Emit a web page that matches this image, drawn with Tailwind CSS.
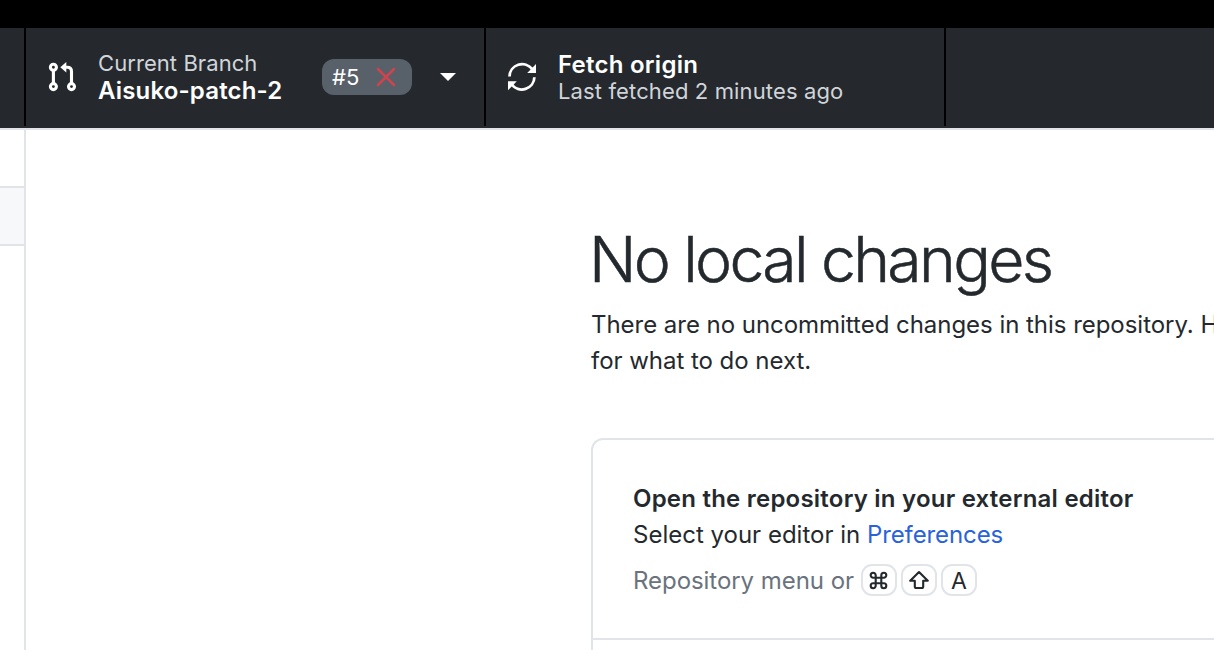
<!DOCTYPE html>
<html lang="en">
<head>
<meta charset="utf-8">
<title>GitHub Desktop</title>
<script src="https://cdn.jsdelivr.net/npm/@tailwindcss/browser@4"></script>
</head>
<body class="h-[650px] w-[1214px] overflow-hidden bg-white font-['Inter','Liberation_Sans',sans-serif] text-[24px] text-[#24292e]">
<div class="flex h-full flex-col">
  <div class="h-7 shrink-0 bg-black"></div>
  <header class="flex h-[102px] shrink-0 border-b-2 border-[#e1e4e8] bg-[#25292e] pb-0.5">
    <div class="w-[26px] shrink-0 border-r-2 border-black"></div>
    <div class="flex w-[460px] shrink-0 items-center border-r-2 border-black pl-[22px]">
      <svg class="h-[30px] w-[30px] shrink-0" viewBox="0 0 30 30" fill="none" stroke="#fff" stroke-width="3.1">
        <circle cx="5.400" cy="5.200" r="3"/><circle cx="5.400" cy="24.600" r="3"/><circle cx="23.500" cy="24.600" r="3"/>
        <path d="M5.400 8v14M23.500 22V9.500q0-4.200-4.200-4.200H17"/><path d="M18.300 0v10.600L12.300 5.300z" fill="#fff" stroke="none"/>
      </svg>
      <div class="ml-5 flex w-[224px] flex-col whitespace-nowrap leading-[28px]">
        <span class="text-[22px] tracking-[0.07px] text-[#d1d5da]">Current Branch</span>
        <span class="font-semibold tracking-[0.17px] text-white">Aisuko-patch-2</span>
      </div>
      <div class="flex h-9 w-[90px] items-center rounded-xl bg-[#586069] pl-2.5 text-[22px] text-white">
        <span>#5</span>
        <svg class="ml-auto mr-4 h-5 w-5" viewBox="0 0 20 20" fill="none" stroke="#cb444e" stroke-width="2.6" stroke-linecap="round"><path d="M2 2l16 16M18 2L2 18"/></svg>
      </div>
      <svg class="ml-7 h-2 w-4" viewBox="0 0 16 8" fill="#fff"><path d="M0 0h16L8 8z"/></svg>
    </div>
    <div class="flex w-[460px] shrink-0 items-center border-r-2 border-black pl-[22px]">
      <svg class="h-[30px] w-[30px] shrink-0" viewBox="0 0 30 30" fill="none" stroke="#fff" stroke-width="2.8">
        <path d="M1.500 14.500A12.600 12.600 0 0 1 24.200 7.200M26.400 15.300A12.600 12.600 0 0 1 3.700 22.400"/>
        <path d="M28 2v9h-8.800zM0 28.200v-9h8.800z" fill="#fff" stroke="none"/>
      </svg>
      <div class="ml-5 flex flex-col whitespace-nowrap pt-0.5 leading-[27px]">
        <span class="font-semibold tracking-[0.25px] text-white">Fetch origin</span>
        <span class="text-[22px] tracking-[0.13px] text-[#d1d5da]">Last fetched 2 minutes ago</span>
      </div>
    </div>
  </header>
  <div class="flex min-h-0 flex-1">
    <aside class="w-[26px] shrink-0 border-r-2 border-[#e1e4e8] pt-14">
      <div class="h-[60px] border-y-2 border-[#e1e4e8] bg-[#f6f8fa]"></div>
    </aside>
    <main class="flex-1 overflow-hidden pl-[565px] pt-[91px]">
      <h1 class="-ml-[2px] whitespace-nowrap text-[62.500px] font-light leading-[76px] tracking-[-2.65px] [-webkit-text-stroke:0.5px_#24292e]">No local changes</h1>
      <p class="mt-[10px] whitespace-nowrap leading-9 tracking-[-0.035px]">There are no uncommitted changes in this repository. Here<br>for what to do next.</p>
      <section class="mt-[59px] h-[400px] w-[900px] rounded-xl border-2 border-[#e1e4e8]">
        <div class="h-[200px] border-b-2 border-[#e1e4e8] pl-10 pt-[41px]">
          <h2 class="font-semibold leading-9 tracking-[0.22px]">Open the repository in your external editor</h2>
          <p class="leading-9">Select your editor in <a class="tracking-[-0.1px] text-[#2962d9]">Preferences</a></p>
          <div class="mt-[11px] flex items-center gap-1 leading-8 text-[#6a737d]">
            <span class="h-8 w-[224px] pt-px tracking-[-0.05px]">Repository menu or</span>
            <kbd class="flex h-8 w-9 items-center justify-center rounded-[11px] border-2 border-[#e1e4e8]">
              <svg class="mr-px h-[19px] w-[19px]" viewBox="0 0 19 19" fill="none" stroke="#24292e" stroke-width="2.1"><path d="M6.700 6.700H4.200A2.500 2.500 0 1 1 6.700 4.200V14.800A2.500 2.500 0 1 1 4.200 12.300H14.800A2.500 2.500 0 1 1 12.300 14.800V4.200A2.500 2.500 0 1 1 14.800 6.700z"/></svg>
            </kbd>
            <kbd class="flex h-8 w-9 items-center justify-center rounded-[11px] border-2 border-[#e1e4e8]">
              <svg class="mr-px h-5 w-5" viewBox="0 0 20 20" fill="none" stroke="#24292e" stroke-width="2.1" stroke-linejoin="round"><path d="M10 2L1.200 10.800H5.800V16.500Q5.800 18 7.300 18H12.700Q14.200 18 14.200 16.500V10.800H18.800z"/></svg>
            </kbd>
            <kbd class="flex h-8 w-9 items-center justify-center rounded-[11px] border-2 border-[#e1e4e8] pt-0.5 font-['Inter','Liberation_Sans',sans-serif] text-[23px] leading-none text-[#24292e]">A</kbd>
          </div>
        </div>
      </section>
    </main>
  </div>
</div>
</body>
</html>
